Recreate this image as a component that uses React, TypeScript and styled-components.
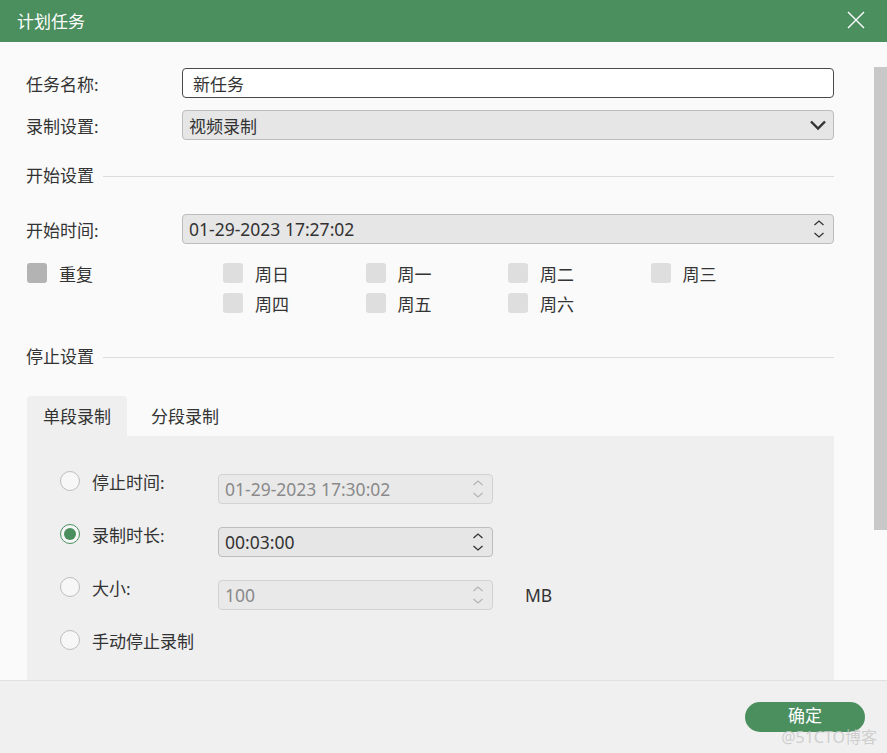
import React from "react";
import styled, { createGlobalStyle } from "styled-components";

const GlobalStyle = createGlobalStyle`
  html, body { margin: 0; padding: 0; }
  body {
    font-family: "Noto Sans", "Noto Sans CJK SC", sans-serif;
    color: #333;
    background: #fafafa;
  }
  * { box-sizing: border-box; }
`;

const Window = styled.div`
  width: 887px;
  height: 753px;
  display: flex;
  flex-direction: column;
  overflow: hidden;
  position: relative;
  background: #fafafa;
`;

const TitleBar = styled.div`
  height: 42px;
  flex: none;
  background: #4b8f5f;
  color: #fff;
  display: flex;
  align-items: center;
  justify-content: space-between;
  padding: 0 20px 2px 17px;
  font-size: 17px;
`;

const CloseButton = styled.div`
  width: 22px;
  height: 22px;
  display: flex;
  align-items: center;
  justify-content: center;
`;

const Body = styled.div`
  flex: 1;
  position: relative;
  overflow: hidden;
`;

const Content = styled.div`
  padding: 26px 53px 0 26px;
  display: flex;
  flex-direction: column;
`;

const Scrollbar = styled.div`
  position: absolute;
  right: 0;
  top: 25px;
  width: 13px;
  height: 463px;
  background: #c8c8c8;
`;

const FormRow = styled.div<{ $top?: number }>`
  display: flex;
  align-items: center;
  height: 30px;
  margin-top: ${(p) => p.$top ?? 0}px;
`;

const Label = styled.div<{ $width: number }>`
  width: ${(p) => p.$width}px;
  flex: none;
  font-size: 17px;
  white-space: nowrap;
`;

const TextInput = styled.div`
  flex: 1;
  height: 30px;
  background: #fff;
  border: 1px solid #4a4a4a;
  border-radius: 4px;
  display: flex;
  align-items: center;
  padding-left: 10px;
  font-size: 17px;
`;

const Field = styled.div<{ $disabled?: boolean; $width?: number }>`
  ${(p) => (p.$width ? `width: ${p.$width}px; flex: none;` : "flex: 1;")}
  height: 30px;
  background: ${(p) => (p.$disabled ? "#e9e9e9" : "#e6e6e6")};
  border: 1px solid ${(p) => (p.$disabled ? "#d2d2d2" : "#bdbdbd")};
  border-radius: 4px;
  display: flex;
  align-items: center;
  justify-content: space-between;
  padding: 0 8px 0 6px;
  font-size: 17.5px;
  color: ${(p) => (p.$disabled ? "#8a8a8a" : "#333")};
`;

const SelectField = styled(Field)`
  font-size: 17px;
  padding-right: 6px;
`;

const SectionHeader = styled.div<{ $top: number }>`
  display: flex;
  align-items: center;
  gap: 9px;
  height: 22px;
  line-height: 20px;
  margin-top: ${(p) => p.$top}px;
  font-size: 17px;
  &::after {
    content: "";
    flex: 1;
    height: 1px;
    margin-top: 1px;
    background: #dcdcdc;
  }
`;

const RepeatArea = styled.div`
  display: flex;
  margin-top: 19px;
`;

const RepeatCell = styled.div`
  width: 197px;
  flex: none;
  padding-left: 1px;
`;

const DayGrid = styled.div`
  display: grid;
  grid-template-columns: repeat(4, 142.5px);
  row-gap: 10px;
`;

const CheckItem = styled.div`
  display: flex;
  align-items: center;
  gap: 12px;
  height: 20px;
  font-size: 17px;
`;

const Box = styled.div<{ $dark?: boolean }>`
  width: 20px;
  height: 20px;
  border-radius: 3px;
  background: ${(p) => (p.$dark ? "#b3b3b3" : "#dedede")};
  flex: none;
`;

const Tabs = styled.div`
  margin-top: 27px;
  margin-left: 1px;
  display: flex;
  flex-direction: column;
`;

const TabList = styled.div`
  display: flex;
  gap: 8px;
  height: 40px;
`;

const Tab = styled.div<{ $active?: boolean }>`
  padding: 0 16px 2px;
  display: flex;
  align-items: center;
  font-size: 17px;
  border-radius: 4px 4px 0 0;
  background: ${(p) => (p.$active ? "#efefef" : "transparent")};
`;

const Panel = styled.div`
  background: #efefef;
  padding: 35px 0 40px 33px;
  display: flex;
  flex-direction: column;
  gap: 20px;
`;

const RadioRow = styled.div`
  display: flex;
  align-items: flex-start;
  height: 33px;
`;

const RadioLabel = styled.label`
  display: flex;
  align-items: center;
  gap: 12px;
  height: 20px;
  width: 158px;
  flex: none;
  font-size: 17px;
  white-space: nowrap;
`;

const Radio = styled.span<{ $checked?: boolean }>`
  width: 20px;
  height: 20px;
  border-radius: 50%;
  border: 1.5px solid ${(p) => (p.$checked ? "#4b8f5f" : "#bdbdbd")};
  background: #f7f7f7;
  display: flex;
  align-items: center;
  justify-content: center;
  flex: none;
  &::after {
    content: "";
    display: ${(p) => (p.$checked ? "block" : "none")};
    width: 12px;
    height: 12px;
    border-radius: 50%;
    background: #4b8f5f;
  }
`;

const FieldSlot = styled.div`
  margin-top: 3px;
  display: flex;
  align-items: center;
`;

const Unit = styled.div`
  margin-left: 32px;
  font-size: 17.5px;
`;

const Footer = styled.div`
  height: 73px;
  flex: none;
  background: #f0f0f0;
  border-top: 1px solid #e0e0e0;
  display: flex;
  justify-content: flex-end;
  align-items: flex-start;
  padding: 21px 22px 0 0;
`;

const ConfirmButton = styled.button`
  width: 120px;
  height: 30px;
  border: none;
  border-radius: 15px;
  background: #4b8f5f;
  color: #fff;
  font-family: inherit;
  font-size: 17px;
  line-height: 20px;
  padding: 0 0 2px;
`;

const Watermark = styled.div`
  position: absolute;
  right: 10px;
  bottom: 7px;
  font-size: 16px;
  line-height: 17px;
  color: rgba(200, 200, 200, 0.85);
  pointer-events: none;
`;

const Spinner: React.FC<{ disabled?: boolean }> = ({ disabled }) => (
  <svg width="12" height="24" viewBox="0 0 12 24" fill="none">
    <path
      d="M1.5 8 L6 4 L10.5 8 M1.5 16 L6 20 L10.5 16"
      stroke={disabled ? "#b5b5b5" : "#333"}
      strokeWidth="1.3"
    />
  </svg>
);

const Chevron = () => (
  <svg width="18" height="12" viewBox="0 0 18 12" fill="none">
    <path d="M2 2.5 L9 9.5 L16 2.5" stroke="#333" strokeWidth="2.4" />
  </svg>
);

const days = ["周日", "周一", "周二", "周三", "周四", "周五", "周六"];

export default function App() {
  return (
    <>
      <GlobalStyle />
      <Window>
        <TitleBar>
          <span>计划任务</span>
          <CloseButton>
            <svg width="20" height="20" viewBox="0 0 20 20">
              <path d="M2 2 L18 18 M18 2 L2 18" stroke="#fff" strokeWidth="1.4" />
            </svg>
          </CloseButton>
        </TitleBar>
        <Body>
          <Content>
            <FormRow>
              <Label $width={156}>任务名称:</Label>
              <TextInput>新任务</TextInput>
            </FormRow>
            <FormRow $top={12}>
              <Label $width={156}>录制设置:</Label>
              <SelectField>
                <span>视频录制</span>
                <Chevron />
              </SelectField>
            </FormRow>
            <SectionHeader $top={25}>开始设置</SectionHeader>
            <FormRow $top={27}>
              <Label $width={156}>开始时间:</Label>
              <Field>
                <span>01-29-2023 17:27:02</span>
                <Spinner />
              </Field>
            </FormRow>
            <RepeatArea>
              <RepeatCell>
                <CheckItem>
                  <Box $dark />
                  重复
                </CheckItem>
              </RepeatCell>
              <DayGrid>
                {days.map((d) => (
                  <CheckItem key={d}>
                    <Box />
                    {d}
                  </CheckItem>
                ))}
              </DayGrid>
            </RepeatArea>
            <SectionHeader $top={33}>停止设置</SectionHeader>
            <Tabs style={{ marginTop: 28 }}>
              <TabList>
                <Tab $active>单段录制</Tab>
                <Tab>分段录制</Tab>
              </TabList>
              <Panel>
                <RadioRow>
                  <RadioLabel>
                    <Radio />
                    停止时间:
                  </RadioLabel>
                  <FieldSlot>
                    <Field $disabled $width={275}>
                      <span>01-29-2023 17:30:02</span>
                      <Spinner disabled />
                    </Field>
                  </FieldSlot>
                </RadioRow>
                <RadioRow>
                  <RadioLabel>
                    <Radio $checked />
                    录制时长:
                  </RadioLabel>
                  <FieldSlot>
                    <Field $width={275}>
                      <span>00:03:00</span>
                      <Spinner />
                    </Field>
                  </FieldSlot>
                </RadioRow>
                <RadioRow>
                  <RadioLabel>
                    <Radio />
                    大小:
                  </RadioLabel>
                  <FieldSlot>
                    <Field $disabled $width={275}>
                      <span>100</span>
                      <Spinner disabled />
                    </Field>
                    <Unit>MB</Unit>
                  </FieldSlot>
                </RadioRow>
                <RadioRow>
                  <RadioLabel>
                    <Radio />
                    手动停止录制
                  </RadioLabel>
                </RadioRow>
              </Panel>
            </Tabs>
          </Content>
          <Scrollbar />
        </Body>
        <Footer>
          <ConfirmButton>确定</ConfirmButton>
        </Footer>
        <Watermark>@51CTO博客</Watermark>
      </Window>
    </>
  );
}
